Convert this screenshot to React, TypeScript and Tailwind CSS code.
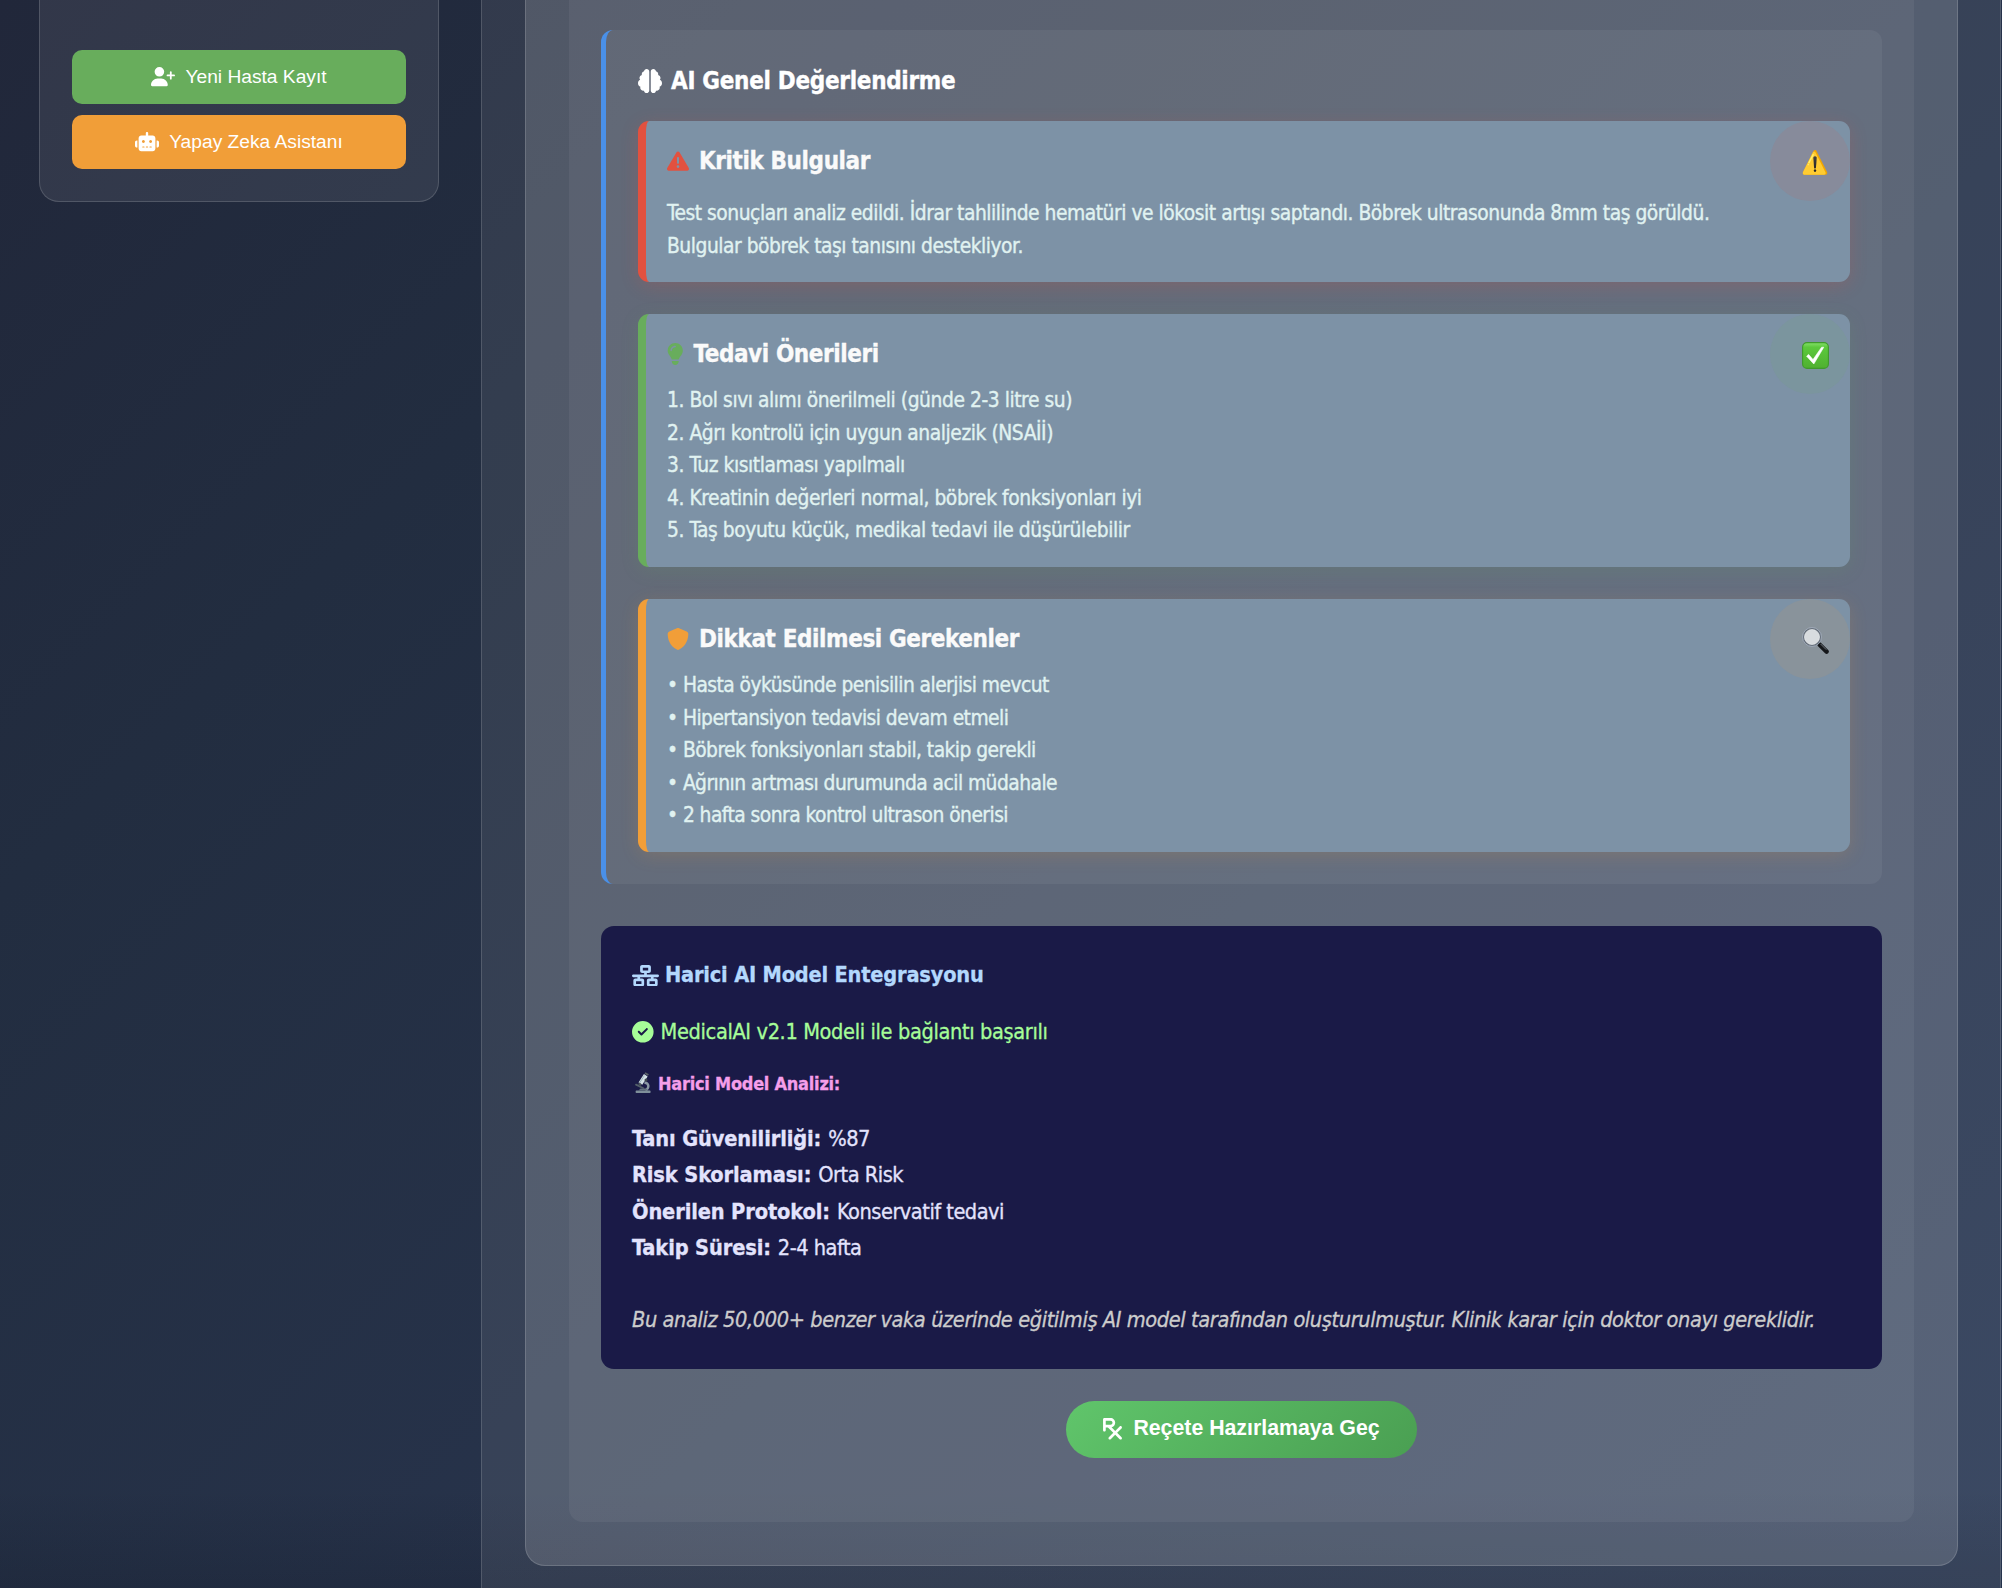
import type { ReactNode } from "react";
import {
  FaUserPlus,
  FaRobot,
  FaBrain,
  FaTriangleExclamation,
  FaLightbulb,
  FaShield,
  FaNetworkWired,
  FaCircleCheck,
  FaPrescription,
} from "react-icons/fa6";

function CheckMark() {
  return (
    <svg viewBox="0 0 27 27" className="size-[27px]">
      <defs>
        <linearGradient id="check-fill" x1="0" y1="0" x2="0" y2="1">
          <stop offset="0" stopColor="#86e06a" />
          <stop offset="0.18" stopColor="#5cc93c" />
          <stop offset="1" stopColor="#4fb030" />
        </linearGradient>
      </defs>
      <rect x="0.6" y="0.6" width="25.8" height="25.8" rx="4.4" fill="url(#check-fill)" stroke="#3f9a2b" strokeWidth="1.1" />
      <path d="M4.6 14.2 L6.6 12.4 L11 17.6 L19.6 5.2 L21.8 5.2 L11.8 22 Z" fill="#fff" stroke="#fff" strokeWidth="0.6" strokeLinejoin="round" />
    </svg>
  );
}

function Magnifier() {
  return (
    <svg viewBox="0 0 27 27" className="size-[27px]">
      <path d="M17.6 17.6 L24.6 24.6" stroke="#15171a" strokeWidth="4.4" strokeLinecap="round" />
      <path d="M18.8 17.2 L24 22.4" stroke="#6d747c" strokeWidth="1" strokeLinecap="round" />
      <circle cx="10" cy="10" r="8.6" fill="#d8dcdf" stroke="#5f6873" strokeWidth="2" />
      <circle cx="10" cy="10" r="9.4" fill="none" stroke="#b6c2d2" strokeWidth="0.7" />
      <circle cx="10" cy="10" r="7.6" fill="none" stroke="#eef1f3" strokeWidth="0.6" />
    </svg>
  );
}

function Microscope() {
  return (
    <svg viewBox="0 0 22 22" className="size-[22px]">
      <path d="M12.5 10.5 C17.5 11.5 17.5 16 13.5 18.5" fill="none" stroke="#8a98a3" strokeWidth="2.4" />
      <rect x="3.6" y="18.6" width="15" height="2.4" rx="0.8" fill="#7f8f9a" />
      <path d="M6.5 18.6 L8.5 16.6 H14.5 L16.5 18.6 Z" fill="#65747f" />
      <path d="M4 12.6 L11.4 16.2" stroke="#54606a" strokeWidth="1.8" strokeLinecap="round" />
      <path d="M13.8 3.2 L8.4 11.6" stroke="#d5e2e6" strokeWidth="4.4" />
      <path d="M12.4 3.6 L7.6 11" stroke="#9db4bd" strokeWidth="1" />
      <path d="M8.6 11.4 L7.4 13.2" stroke="#4a545c" strokeWidth="3" />
      <path d="M15.2 1.2 L14.2 2.8" stroke="#5b6369" strokeWidth="4" />
      <circle cx="14" cy="8" r="1.5" fill="#3e474e" />
    </svg>
  );
}

type FindingProps = {
  tone: string;
  circle: string;
  icon: ReactNode;
  title: string;
  emoji: ReactNode;
  lines: string[];
  headingGap: string;
  tracking: string;
};

function Finding({ tone, circle, icon, title, emoji, lines, headingGap, tracking }: FindingProps) {
  return (
    <section className={`relative rounded-[11px] border-l-[8px] bg-[#7d92a6] pt-[22px] pb-[20px] pl-[21px] ${tone}`}>
      <h4
        className={`flex h-[36px] items-center gap-[10px] text-[24px] font-bold tracking-[-0.4px] text-[#fafafa] [-webkit-text-stroke:0.35px] ${headingGap}`}
      >
        {icon}
        <span>{title}</span>
      </h4>
      <div className={`text-[20.8px] leading-[32.5px] text-[#e0f2f1] [-webkit-text-stroke:0.35px] ${tracking}`}>
        {lines.map((line) => (
          <p key={line}>{line}</p>
        ))}
      </div>
      <div className={`absolute top-0 right-0 size-[80px] rounded-full ${circle}`} />
      <div className="absolute top-[26px] right-[20px] flex size-[30px] items-center justify-center text-[22.4px] leading-none">
        {emoji}
      </div>
    </section>
  );
}

const results = [
  ["Tanı Güvenilirliği:", "%87"],
  ["Risk Skorlaması:", "Orta Risk"],
  ["Önerilen Protokol:", "Konservatif tedavi"],
  ["Takip Süresi:", "2-4 hafta"],
];

export default function App() {
  return (
    <div className="flex h-[1588px] w-[2002px] overflow-hidden bg-[linear-gradient(to_bottom,transparent_1490px,rgba(10,15,25,0.18)_1588px),linear-gradient(135deg,#21273a,#222d40_25%,#27334b_60%,#2b3a56)] font-['DejaVu_Sans_Condensed','DejaVu_Sans',sans-serif]">
      <aside className="w-[481px] shrink-0 px-[39px]">
        <div className="flex h-[202px] w-[400px] flex-col gap-[11px] rounded-b-[20px] border border-t-0 border-white/15 bg-white/8 px-[32px] pt-[50px] font-['Liberation_Sans',sans-serif] text-[19.2px] text-white">
          <button className="flex h-[54px] items-center justify-center gap-[10px] rounded-[10px] bg-[#68ad5c]">
            <FaUserPlus className="h-[19.2px] w-[24px]" />
            <span>Yeni Hasta Kayıt</span>
          </button>
          <button className="flex h-[54px] items-center justify-center gap-[10px] rounded-[10px] bg-[#f19e38]">
            <FaRobot className="h-[19.2px] w-[24px]" />
            <span>Yapay Zeka Asistanı</span>
          </button>
        </div>
      </aside>

      <main className="h-[1588px] w-[1520px] shrink-0 border-x border-white/15 bg-white/8 pl-[43px]">
        <div className="h-[1566px] w-[1433px] rounded-b-[20px] border border-t-0 border-white/15 bg-white/15 px-[43px]">
          <div className="h-[1522px] rounded-b-[14px] bg-white/5 px-[32px] pt-[30px]">
            <section className="h-[854px] rounded-[12px] border-l-[5px] border-[#4a90e8] bg-white/5 pt-[33px] pr-[32px] pl-[32px]">
              <h3 className="mb-[22px] flex h-[36px] items-center gap-[9px] text-[24px] font-bold tracking-[-0.3px] text-white [-webkit-text-stroke:0.35px]">
                <FaBrain className="size-[24px]" />
                <span>AI Genel Değerlendirme</span>
              </h3>
              <div className="flex flex-col gap-[32px]">
                <Finding
                  tone="h-[161px] border-[#e2513f] shadow-[0_4px_18px_rgba(226,81,63,0.2)]"
                  circle="bg-[#e2513f]/10"
                  headingGap="mb-[18px]"
                  tracking="tracking-[-0.47px]"
                  icon={<FaTriangleExclamation className="size-[22px] text-[#e2513f]" />}
                  title="Kritik Bulgular"
                  emoji="⚠️"
                  lines={[
                    "Test sonuçları analiz edildi. İdrar tahlilinde hematüri ve lökosit artışı saptandı. Böbrek ultrasonunda 8mm taş görüldü.",
                    "Bulgular böbrek taşı tanısını destekliyor.",
                  ]}
                />
                <Finding
                  tone="h-[253px] border-[#68ad5c] shadow-[0_4px_18px_rgba(104,173,92,0.15)]"
                  circle="bg-[#68ad5c]/10"
                  headingGap="mb-[12px]"
                  tracking="tracking-[-0.44px]"
                  icon={<FaLightbulb className="h-[22px] w-[16.5px] text-[#68ad5c]" />}
                  title="Tedavi Önerileri"
                  emoji={<CheckMark />}
                  lines={[
                    "1. Bol sıvı alımı önerilmeli (günde 2-3 litre su)",
                    "2. Ağrı kontrolü için uygun analjezik (NSAİİ)",
                    "3. Tuz kısıtlaması yapılmalı",
                    "4. Kreatinin değerleri normal, böbrek fonksiyonları iyi",
                    "5. Taş boyutu küçük, medikal tedavi ile düşürülebilir",
                  ]}
                />
                <Finding
                  tone="h-[253px] border-[#f19e38] shadow-[0_4px_18px_rgba(241,158,56,0.16)]"
                  circle="bg-[#f19e38]/10"
                  headingGap="mb-[12px]"
                  tracking="tracking-[-0.55px]"
                  icon={<FaShield className="size-[22px] text-[#f19e38]" />}
                  title="Dikkat Edilmesi Gerekenler"
                  emoji={<Magnifier />}
                  lines={[
                    "• Hasta öyküsünde penisilin alerjisi mevcut",
                    "• Hipertansiyon tedavisi devam etmeli",
                    "• Böbrek fonksiyonları stabil, takip gerekli",
                    "• Ağrının artması durumunda acil müdahale",
                    "• 2 hafta sonra kontrol ultrason önerisi",
                  ]}
                />
              </div>
            </section>

            <section className="mt-[42px] h-[443px] rounded-[13px] bg-[#1a1a47] px-[31px] pt-[31px] text-[21.6px] [-webkit-text-stroke:0.3px]">
              <h3 className="flex h-[37px] items-center gap-[6px] font-bold tracking-[-0.2px] text-[#b3d8fd]">
                <FaNetworkWired className="h-[21.6px] w-[27px]" />
                <span>Harici AI Model Entegrasyonu</span>
              </h3>
              <p className="mt-[20px] flex h-[36px] items-center gap-[7px] tracking-[-0.37px] text-[#a6fd98]">
                <FaCircleCheck className="size-[21.6px]" />
                <span>MedicalAI v2.1 Modeli ile bağlantı başarılı</span>
              </p>
              <h4 className="mt-[15px] flex h-[36px] items-center gap-[4px] text-[18px] font-bold tracking-[-0.25px] text-[#f49eea]">
                <Microscope />
                <span>Harici Model Analizi:</span>
              </h4>
              <dl className="mt-[20px] text-[#e3e3fd]">
                {results.map(([label, value]) => (
                  <div key={label} className="flex h-[36.4px] items-center gap-[7px]">
                    <dt className="font-bold tracking-[-0.12px]">{label}</dt>
                    <dd className="tracking-[-0.5px]">{value}</dd>
                  </div>
                ))}
              </dl>
              <p className="mt-[35px] h-[36px] leading-[36px] tracking-[-0.4px] whitespace-nowrap text-[#cccccc] italic">
                Bu analiz 50,000+ benzer vaka üzerinde eğitilmiş AI model tarafından oluşturulmuştur. Klinik karar için
                doktor onayı gereklidir.
              </p>
            </section>

            <div className="mt-[32px] flex justify-center">
              <button className="flex h-[57px] w-[351px] items-center justify-center gap-[11px] rounded-full bg-linear-135 from-[#60c56b] to-[#4a9f52] pb-[1px] font-['Liberation_Sans',sans-serif] text-[21.3px] font-bold text-white">
                <FaPrescription className="h-[21.6px] w-[19px]" />
                <span>Reçete Hazırlamaya Geç</span>
              </button>
            </div>
          </div>
        </div>
      </main>
    </div>
  );
}
